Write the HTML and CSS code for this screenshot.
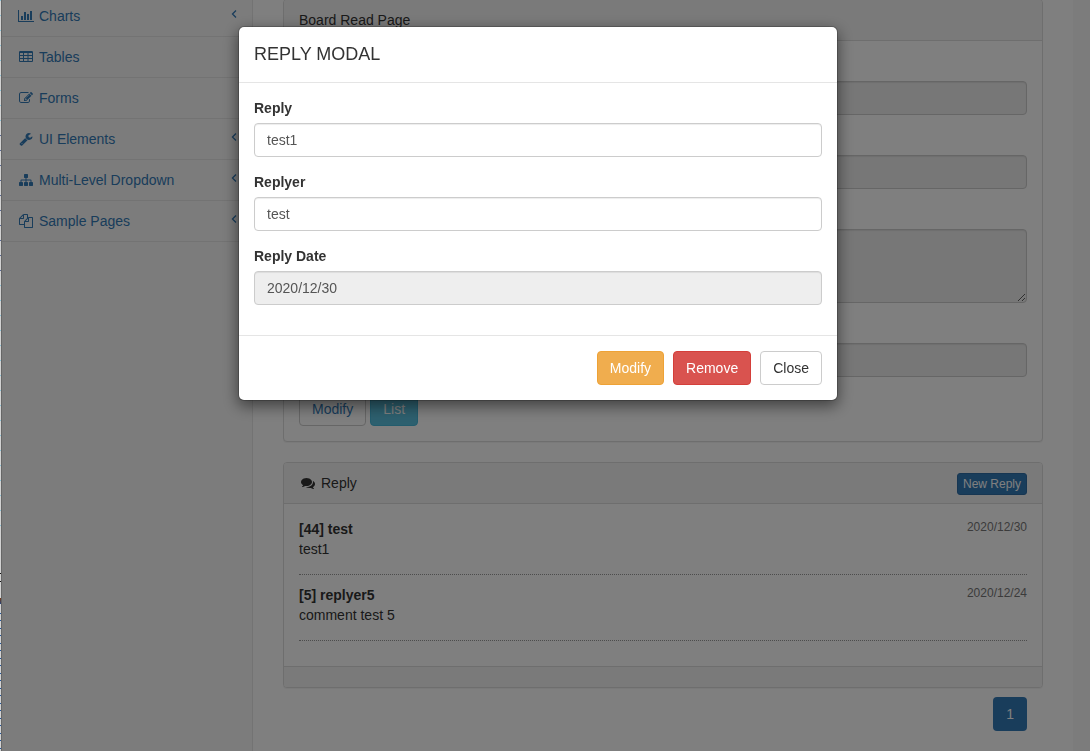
FILE: index.html
```html
<!DOCTYPE html>
<html lang="en">
<head>
<meta charset="utf-8">
<title>Board Read Page</title>
<link rel="stylesheet" href="styles.css">
</head>
<body>
<div class="edge"></div>
<div class="wrapper">
  <nav class="sidebar">
    <ul class="side-menu">
      <li><a href="#"><svg class="icon" viewBox="-128 0 2304 1792"><path d="M640 896v512h-256v-512h256zm384-512v1024h-256v-1024h256zm1024 1152v128h-2048v-1536h128v1408h1920zm-640-896v768h-256v-768h256zm384-384v1152h-256v-1152h256z"/></svg><span>Charts</span><svg class="arrow" viewBox="0 0 6 10"><path d="M5 1.500 1.500 5 5 8.500"/></svg></a></li>
      <li><a href="#"><svg class="icon" viewBox="-256 0 2304 1792"><path fill-rule="evenodd" d="M160 128h1472q66 0 113 47t47 113v1088q0 66-47 113t-113 47h-1472q-66 0-113-47t-47-113v-1088q0-66 47-113t113-47zM128 384h384v256h-384zM640 384h448v256h-448zM1216 384h448v256h-448zM128 768h384v256h-384zM640 768h448v256h-448zM1216 768h448v256h-448zM128 1152h384v256h-384zM640 1152h448v256h-448zM1216 1152h448v256h-448z"/></svg><span>Tables</span></a></li>
      <li><a href="#"><svg class="icon" viewBox="-256 0 2304 1792"><path d="M888 1184l116-116-152-152-116 116v56h96v96h56zm440-720q-16-16-33 1l-350 350q-17 17-1 33t33-1l350-350q17-17 1-33zm80 594v190q0 119-84.500 203.500t-203.500 84.500h-832q-119 0-203.500-84.500t-84.500-203.500v-832q0-119 84.500-203.500t203.500-84.500h832q63 0 117 25 15 7 18 23 3 17-9 29l-49 49q-14 14-32 8-23-6-45-6h-832q-66 0-113 47t-47 113v832q0 66 47 113t113 47h832q66 0 113-47t47-113v-126q0-13 9-22l64-64q15-15 35-7t20 29zm-96-738l288 288-672 672h-288v-288zm444 132l-92 92-288-288 92-92q28-28 68-28t68 28l152 152q28 28 28 68t-28 68z"/></svg><span>Forms</span></a></li>
      <li><a href="#"><svg class="icon" viewBox="-256 0 2304 1792"><path d="M448 1472q0-26-19-45t-45-19-45 19-19 45 19 45 45 19 45-19 19-45zm644-420l-682 682q-37 37-90 37-52 0-91-37l-106-108q-38-36-38-90 0-53 38-91l681-681q39 98 114.500 173.500t173.500 114.500zm634-435q0 39-23 106-47 134-164.500 217.500t-258.500 83.500q-185 0-316.500-131.500t-131.500-316.500 131.500-316.500 316.500-131.500q58 0 121.500 16.500t107.500 46.500q16 11 16 28t-16 28l-293 169v224l193 107q5-3 79-48.500t135.500-81 70.500-35.500q15 0 23.500 10t8.500 25z"/></svg><span>UI Elements</span><svg class="arrow" viewBox="0 0 6 10"><path d="M5 1.500 1.500 5 5 8.500"/></svg></a></li>
      <li><a href="#"><svg class="icon" viewBox="-256 0 2304 1792"><path d="M1792 1248v320q0 40-28 68t-68 28h-320q-40 0-68-28t-28-68v-320q0-40 28-68t68-28h96v-192h-512v192h96q40 0 68 28t28 68v320q0 40-28 68t-68 28h-320q-40 0-68-28t-28-68v-320q0-40 28-68t68-28h96v-192h-512v192h96q40 0 68 28t28 68v320q0 40-28 68t-68 28h-320q-40 0-68-28t-28-68v-320q0-40 28-68t68-28h96v-192q0-52 38-90t90-38h512v-192h-96q-40 0-68-28t-28-68v-320q0-40 28-68t68-28h320q40 0 68 28t28 68v320q0 40-28 68t-68 28h-96v192h512q52 0 90 38t38 90v192h96q40 0 68 28t28 68z"/></svg><span>Multi-Level Dropdown</span><svg class="arrow" viewBox="0 0 6 10"><path d="M5 1.500 1.500 5 5 8.500"/></svg></a></li>
      <li><a href="#"><svg class="icon" viewBox="-256 0 2304 1792"><path d="M1696 384q40 0 68 28t28 68v1216q0 40-28 68t-68 28h-960q-40 0-68-28t-28-68v-288h-544q-40 0-68-28t-28-68v-672q0-40 20-88t48-76l408-408q28-28 76-48t88-20h416q40 0 68 28t28 68v328q68-40 128-40h416zm-544 213l-299 299h299v-299zm-640-384l-299 299h299v-299zm196 647l316-316v-416h-384v416q0 40-28 68t-68 28h-416v640h512v-256q0-40 20-88t48-76zm956 804v-1152h-384v416q0 40-28 68t-68 28h-416v640h896z"/></svg><span>Sample Pages</span><svg class="arrow" viewBox="0 0 6 10"><path d="M5 1.500 1.500 5 5 8.500"/></svg></a></li>
    </ul>
  </nav>

  <main class="page">
    <section class="panel panel-read">
      <div class="panel-heading">Board Read Page</div>
      <div class="panel-body">
        <div class="form-group"><input class="form-control" aria-label="Bno" readonly></div>
        <div class="form-group"><input class="form-control" aria-label="Title" readonly></div>
        <div class="form-group"><textarea class="form-control" aria-label="Content" rows="3" readonly></textarea></div>
        <div class="form-group"><input class="form-control" aria-label="Writer" readonly></div>
        <div class="actions">
          <button type="button" class="btn btn-link">Modify</button>
          <button type="button" class="btn btn-info">List</button>
        </div>
      </div>
    </section>

    <section class="panel">
      <div class="panel-heading reply-heading">
        <svg class="icon" viewBox="-256 0 2304 1792"><path d="M1408 768q0 139-94 257t-256.500 186.500-353.500 68.500q-86 0-176-16-124 88-278 128-36 9-86 16h-3q-11 0-20.500-8t-11.500-21q-1-3-1-6.500t.5-6.500 2-6l2.500-5 3.500-5.500 4-5 4.500-5 4-4.500q5-6 23-25t26-29.500 22.500-29 25-38.500 20.500-44q-124-72-195-177t-71-224q0-139 94-257t256.500-186.500 353.500-68.500 353.500 68.500 256.500 186.500 94 257zm384 256q0 120-71 224.500t-195 176.500q10 24 20.500 44t25 38.500 22.500 29 26 29.500 23 25q1 1 4 4.500t4.500 5 4 5 3.500 5.500l2.500 5 2 6 .5 6.500-1 6.500q-3 14-13 22t-22 7q-50-7-86-16-154-40-278-128-90 16-176 16-271 0-472-132 58 4 88 4 161 0 309-45t264-129q125-92 192-212t67-254q0-77-23-152 129 71 204 178t75 230z"/></svg>
        <span>Reply</span>
        <button type="button" class="btn btn-primary btn-xs">New Reply</button>
      </div>
      <div class="panel-body">
        <ul class="chat">
          <li>
            <div class="chat-head"><strong>[44] test</strong><small>2020/12/30</small></div>
            <p>test1</p>
          </li>
          <li>
            <div class="chat-head"><strong>[5] replyer5</strong><small>2020/12/24</small></div>
            <p>comment test 5</p>
          </li>
        </ul>
      </div>
      <div class="panel-footer">
        <ul class="pagination"><li><a href="#">1</a></li></ul>
      </div>
    </section>
  </main>
  <div class="gutter"></div>
</div>

<div class="backdrop"></div>
<div class="modal" role="dialog" aria-labelledby="modal-title">
  <div class="modal-content">
    <div class="modal-header"><h4 id="modal-title">REPLY MODAL</h4></div>
    <div class="modal-body">
      <div class="form-group"><label for="reply">Reply</label><input class="form-control" id="reply" value="test1"></div>
      <div class="form-group"><label for="replyer">Replyer</label><input class="form-control" id="replyer" value="test"></div>
      <div class="form-group"><label for="reply-date">Reply Date</label><input class="form-control" id="reply-date" value="2020/12/30" readonly></div>
    </div>
    <div class="modal-footer">
      <button type="button" class="btn btn-warning">Modify</button>
      <button type="button" class="btn btn-danger">Remove</button>
      <button type="button" class="btn btn-default">Close</button>
    </div>
  </div>
</div>
</body>
</html>
```
FILE: styles.css
```css
* {
  box-sizing: border-box;
}

body {
  display: flex;
  height: 100vh;
  margin: 0;
  overflow: hidden;
  background: #fff;
  color: #333;
  font: 14px/20px "Liberation Sans", Arial, sans-serif;
}

ul {
  margin: 0;
  padding: 0;
  list-style: none;
}

a {
  color: #337ab7;
  text-decoration: none;
}

/* sliver of the neighbouring window: an even run of small marks */
.edge {
  flex: none;
  width: 1px;
  background-color: #d2d2d2;
  background-image:
    linear-gradient(#111, #111),
    linear-gradient(#111, #111),
    linear-gradient(#7a3c14, #24427a),
    repeating-linear-gradient(#8cc4d8 0 1px, transparent 1px 15px),
    repeating-linear-gradient(#5a6a98 0 1px, transparent 1px 15px),
    repeating-linear-gradient(#8cc4d8 0 1px, transparent 1px 15px),
    repeating-linear-gradient(#2458a0 0 1px, transparent 1px 7px, #2458a0 7px 8px, transparent 8px 15px);
  background-position: 0 573px, 0 581px, 0 598px, 0 0, 0 135px, 0 285px, 0 613px;
  background-size: 1px 1px, 1px 1px, 1px 6px, 1px 135px, 1px 150px, 1px 255px, 1px 100%;
  background-repeat: no-repeat;
}

.wrapper {
  display: flex;
  flex: 1;
  min-width: 0;
}

.sidebar {
  flex: none;
  width: 251px;
  border-left: 1px solid #ccc;
  background: #f8f8f8;
}

.side-menu {
  margin-top: -4px;
}

.side-menu li {
  border-bottom: 1px solid #e7e7e7;
}

.side-menu a {
  display: flex;
  align-items: center;
  gap: 4px;
  padding: 10px 15px;
}

.icon {
  flex: none;
  width: 18px;
  height: 14px;
  fill: currentColor;
}

.arrow {
  width: 6px;
  height: 10px;
  margin: 0 0 5px auto;
  fill: none;
  stroke: currentColor;
  stroke-width: 1.3;
}

.page {
  flex: 1;
  min-width: 0;
  padding: 0 30px;
  border-left: 1px solid #e7e7e7;
}

.gutter {
  flex: none;
  width: 17px;
  background: #f8f8f8;
}

.panel {
  margin-bottom: 20px;
  border: 1px solid #ddd;
  border-radius: 4px;
  background: #fff;
  box-shadow: 0 1px 1px rgba(0, 0, 0, .05);
}

.panel-read {
  margin-top: -1px;
}

.panel-read .form-group {
  padding-top: 25px;
}

.panel-heading {
  padding: 10px 15px;
  border-bottom: 1px solid #ddd;
  border-radius: 3px 3px 0 0;
  background: #f5f5f5;
}

.reply-heading {
  display: flex;
  align-items: center;
  gap: 4px;
  height: 41px;
}

.panel-body {
  padding: 15px;
}

.panel-footer {
  height: 21px;
  padding: 10px 15px;
  border-top: 1px solid #ddd;
  border-radius: 0 0 3px 3px;
  background: #f5f5f5;
}

.form-group {
  margin-bottom: 15px;
}

.form-group label {
  display: block;
  margin-bottom: 5px;
  font-weight: 700;
}

.form-control {
  display: block;
  width: 100%;
  height: 34px;
  padding: 6px 12px;
  border: 1px solid #ccc;
  border-radius: 4px;
  background: #fff;
  box-shadow: inset 0 1px 1px rgba(0, 0, 0, .075);
  color: #555;
  font: inherit;
}

.form-control:read-only {
  background: #eee;
}

textarea.form-control {
  height: auto;
}

.actions {
  display: flex;
  gap: 4px;
}

.btn {
  padding: 6px 12px;
  border: 1px solid #ccc;
  border-radius: 4px;
  background: #fff;
  color: #333;
  font: inherit;
  cursor: pointer;
}

.btn-link {
  color: #337ab7;
}

.btn-info {
  border-color: #46b8da;
  background: #5bc0de;
  color: #fff;
}

.btn-primary {
  border-color: #2e6da4;
  background: #337ab7;
  color: #fff;
}

.btn-warning {
  border-color: #eea236;
  background: #f0ad4e;
  color: #fff;
}

.btn-danger {
  border-color: #d43f3a;
  background: #d9534f;
  color: #fff;
}

.btn-xs {
  align-self: flex-start;
  margin-left: auto;
  padding: 1px 5px;
  border-radius: 3px;
  font-size: 12px;
  line-height: 18px;
}

.chat li {
  margin-bottom: 10px;
  padding-bottom: 5px;
  border-bottom: 1px dotted #999;
}

.chat-head {
  display: flex;
  justify-content: space-between;
}

.chat-head small {
  color: #777;
  font-size: 12px;
  line-height: 16px;
}

.chat p {
  margin: 0 0 10px;
}

.pagination {
  float: right;
  margin-top: 20px;
}

.pagination a {
  display: block;
  padding: 7px 13px;
  border-radius: 4px;
  background: #337ab7;
  color: #fff;
}

.backdrop {
  position: fixed;
  inset: 0 0 0 1px;
  background: rgba(0, 0, 0, .5);
}

.modal {
  position: fixed;
  inset: 0 15px 0 1px;
  padding-top: 26px;
}

.modal-content {
  max-width: 600px;
  margin: 0 auto;
  border: 1px solid rgba(0, 0, 0, .2);
  border-radius: 6px;
  background: #fff;
  background-clip: padding-box;
  box-shadow: 0 5px 15px rgba(0, 0, 0, .5);
}

.modal-header {
  padding: 15px;
  border-bottom: 1px solid #e5e5e5;
}

.modal-header h4 {
  margin: 0;
  font-size: 18px;
  font-weight: 400;
  line-height: 25px;
}

.modal-body {
  padding: 15px;
}

.modal-footer {
  display: flex;
  justify-content: flex-end;
  gap: 9px;
  padding: 15px;
  border-top: 1px solid #e5e5e5;
}
```
